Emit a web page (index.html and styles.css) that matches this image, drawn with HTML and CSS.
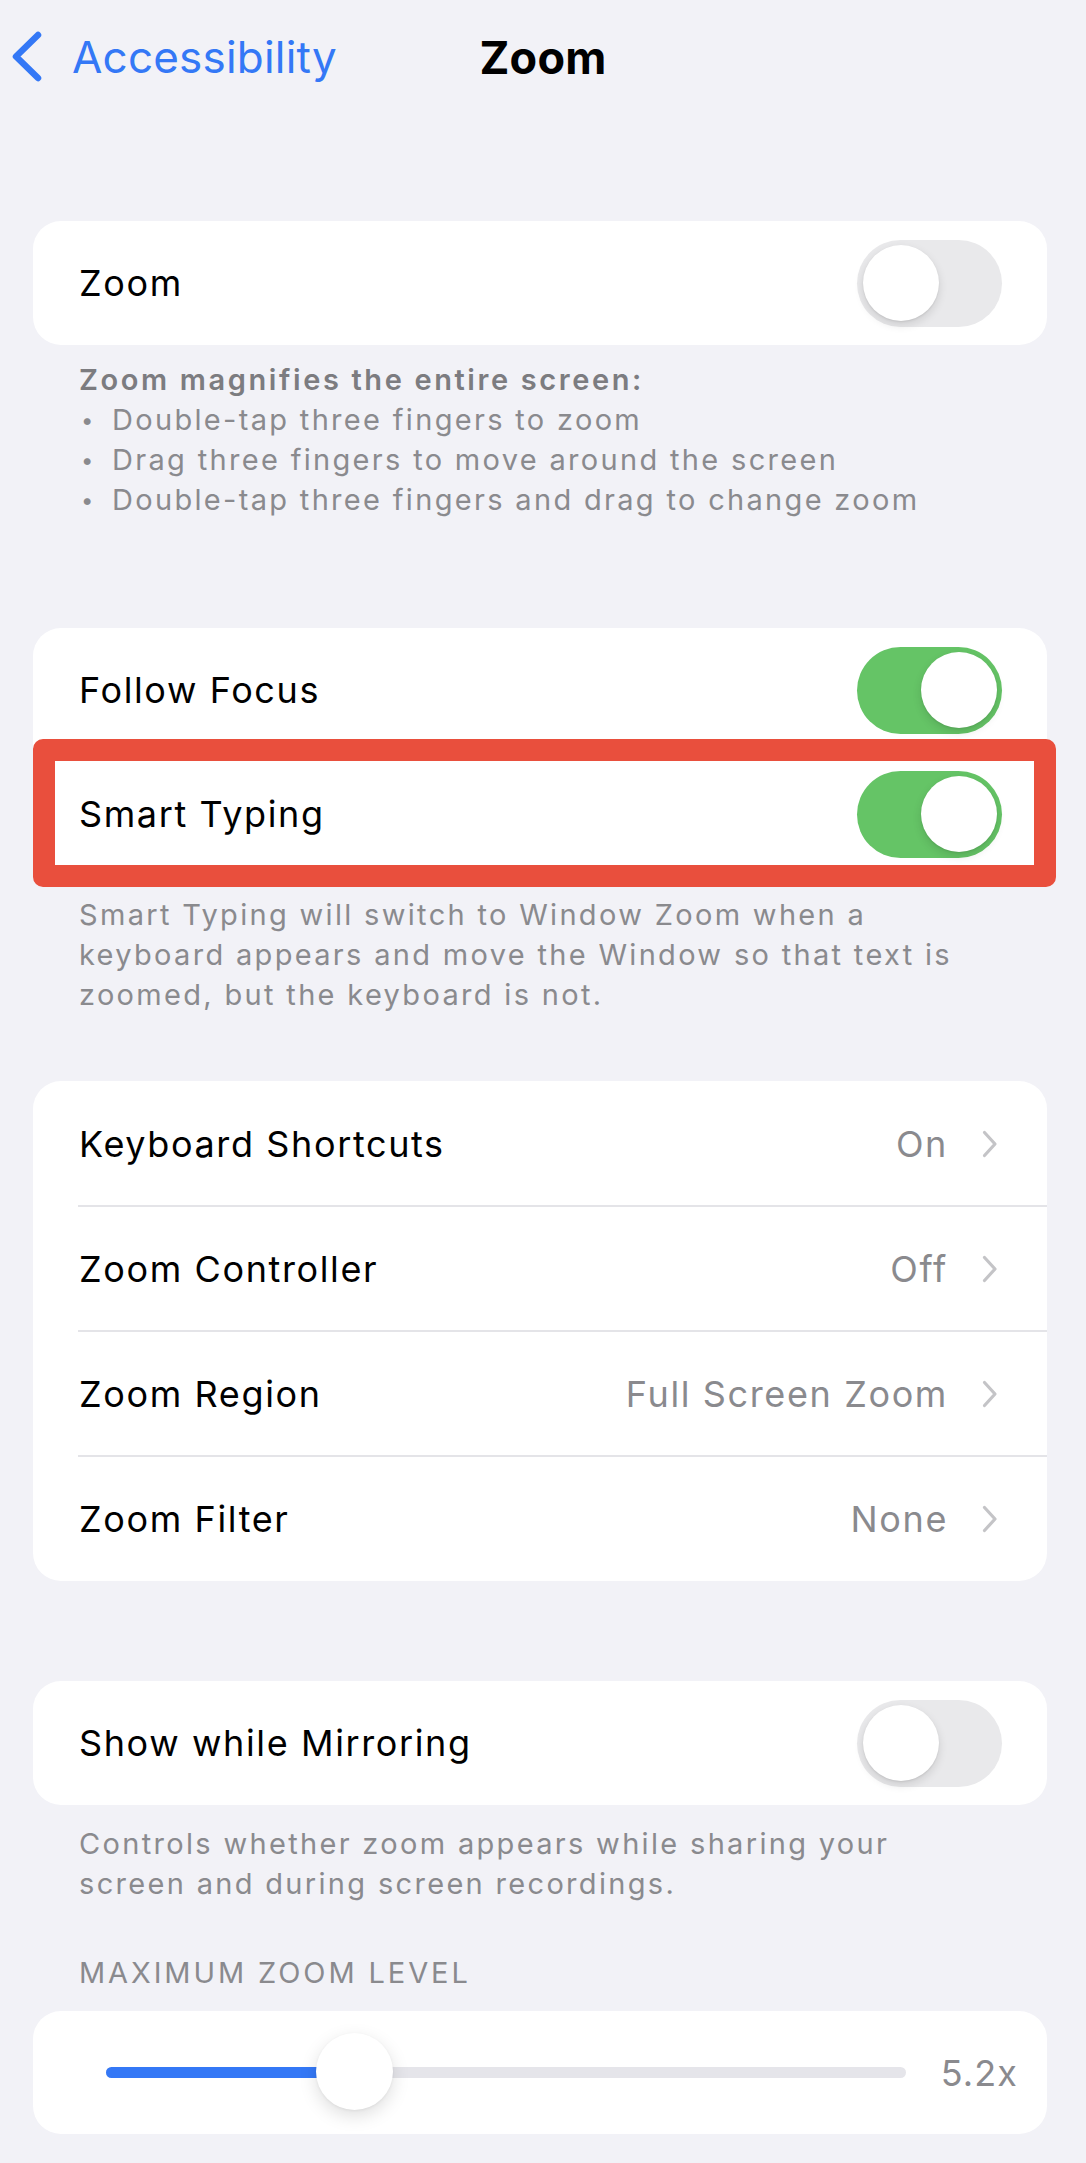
FILE: index.html
```html
<!DOCTYPE html>
<html lang="en">
<head>
<meta charset="utf-8">
<title>Zoom</title>
<link rel="stylesheet" href="styles.css">
</head>
<body>
<div class="screen">
  <header class="nav">
    <a class="back" href="#">
      <svg class="back-chevron" width="36" height="60" viewBox="0 0 36 60" aria-hidden="true">
        <path d="M28 8 L6 29.5 L28 51" fill="none" stroke="#3478F6" stroke-width="6.5" stroke-linecap="round" stroke-linejoin="round"/>
      </svg>
      <span class="back-label">Accessibility</span>
    </a>
    <h1 class="title">Zoom</h1>
    <div class="nav-spacer"></div>
  </header>

  <section class="group group-1">
    <div class="card">
      <div class="row">
        <span class="row-label">Zoom</span>
        <span class="toggle"><span class="knob"></span></span>
      </div>
    </div>
    <div class="footer footer-1">
      <p class="footer-strong">Zoom magnifies the entire screen:</p>
      <ul class="bullets">
        <li><span class="dot">•</span><span>Double-tap three fingers to zoom</span></li>
        <li><span class="dot">•</span><span>Drag three fingers to move around the screen</span></li>
        <li><span class="dot">•</span><span>Double-tap three fingers and drag to change zoom</span></li>
      </ul>
    </div>
  </section>

  <section class="group group-2">
    <div class="card">
      <div class="row">
        <span class="row-label">Follow Focus</span>
        <span class="toggle on"><span class="knob"></span></span>
      </div>
      <div class="row highlighted">
        <span class="row-label">Smart Typing</span>
        <span class="toggle on"><span class="knob"></span></span>
        <span class="highlight-box"></span>
      </div>
    </div>
    <div class="footer footer-2">
      <p>Smart Typing will switch to Window Zoom when a<br>keyboard appears and move the Window so that text is<br>zoomed, but the keyboard is not.</p>
    </div>
  </section>

  <section class="group group-3">
    <div class="card">
      <div class="row nav-row">
        <span class="row-label">Keyboard Shortcuts</span>
        <span class="row-value">On</span>
        <svg class="chev" width="16" height="28" viewBox="0 0 16 28" aria-hidden="true"><path d="M2.5 2.5 L13 14 L2.5 25.5" fill="none" stroke="#C4C4C7" stroke-width="3.2" stroke-linecap="round" stroke-linejoin="round"/></svg>
      </div>
      <div class="row nav-row">
        <span class="row-label">Zoom Controller</span>
        <span class="row-value">Off</span>
        <svg class="chev" width="16" height="28" viewBox="0 0 16 28" aria-hidden="true"><path d="M2.5 2.5 L13 14 L2.5 25.5" fill="none" stroke="#C4C4C7" stroke-width="3.2" stroke-linecap="round" stroke-linejoin="round"/></svg>
      </div>
      <div class="row nav-row">
        <span class="row-label">Zoom Region</span>
        <span class="row-value">Full Screen Zoom</span>
        <svg class="chev" width="16" height="28" viewBox="0 0 16 28" aria-hidden="true"><path d="M2.5 2.5 L13 14 L2.5 25.5" fill="none" stroke="#C4C4C7" stroke-width="3.2" stroke-linecap="round" stroke-linejoin="round"/></svg>
      </div>
      <div class="row nav-row">
        <span class="row-label">Zoom Filter</span>
        <span class="row-value">None</span>
        <svg class="chev" width="16" height="28" viewBox="0 0 16 28" aria-hidden="true"><path d="M2.5 2.5 L13 14 L2.5 25.5" fill="none" stroke="#C4C4C7" stroke-width="3.2" stroke-linecap="round" stroke-linejoin="round"/></svg>
      </div>
    </div>
  </section>

  <section class="group group-4">
    <div class="card">
      <div class="row">
        <span class="row-label">Show while Mirroring</span>
        <span class="toggle"><span class="knob"></span></span>
      </div>
    </div>
    <div class="footer footer-4">
      <p>Controls whether zoom appears while sharing your<br>screen and during screen recordings.</p>
    </div>
  </section>

  <section class="group group-5">
    <h2 class="section-header">Maximum Zoom Level</h2>
    <div class="card slider-card">
      <div class="slider">
        <div class="track"><div class="fill" style="width: 31%"></div></div>
        <span class="thumb" style="left: 31%"></span>
      </div>
      <span class="slider-value">5.2x</span>
    </div>
  </section>
</div>
</body>
</html>
```

FILE: styles.css
```css
* { box-sizing: border-box; }

html, body {
  margin: 0;
  padding: 0;
  background: #F2F2F7;
}

body {
  font-family: Inter, "Noto Sans", "Liberation Sans", sans-serif;
  color: #000;
  width: 1086px;
  height: 2163px;
  overflow: hidden;
}

.screen {
  padding: 0 39px 0 33px;
}

/* ---------- nav ---------- */
.nav {
  height: 114px;
  margin: 0 -39px 0 -33px;
  display: grid;
  grid-template-columns: 1fr auto 1fr;
  align-items: center;
}

.back {
  display: flex;
  align-items: center;
  text-decoration: none;
  color: #3478F6;
  padding-left: 10px;
}

.back-chevron { display: block; }

.back-label {
  font-size: 44px;
  margin-left: 26px;
  letter-spacing: 0.2px;
}

.title {
  margin: 0;
  font-size: 45px;
  font-weight: 700;
  letter-spacing: 0.2px;
}

/* ---------- groups ---------- */
.group-1 { margin-top: 107px; }
.group-2 { margin-top: 108px; }
.group-3 { margin-top: 66px; }
.group-4 { margin-top: 100px; }
.group-5 { margin-top: 49px; }

.card {
  background: #fff;
  border-radius: 28px;
}

.row {
  position: relative;
  height: 124px;
  display: flex;
  align-items: center;
  padding: 0 45px 0 46px;
}

.row-label {
  flex: 1;
  font-size: 36px;
  letter-spacing: 0.045em;
  white-space: nowrap;
}

/* ---------- toggle ---------- */
.toggle {
  width: 145px;
  height: 87px;
  border-radius: 44px;
  background: #E9E9EB;
  padding: 5.5px;
  display: flex;
  justify-content: flex-start;
  flex: none;
}

.toggle.on {
  background: #65C466;
  justify-content: flex-end;
}

.knob {
  width: 76px;
  height: 76px;
  border-radius: 50%;
  background: #fff;
  box-shadow: 0 4px 10px rgba(0,0,0,0.12), 0 1px 2px rgba(0,0,0,0.08);
}

/* ---------- highlight annotation ---------- */
.highlight-box {
  position: absolute;
  top: -13px;
  bottom: -11px;
  left: 0;
  right: -9px;
  border: 22px solid #E94F3D;
  border-radius: 10px;
  pointer-events: none;
}

/* ---------- footers ---------- */
.footer {
  padding-left: 46px;
  color: #8A8A8E;
  font-size: 29px;
  line-height: 40px;
  letter-spacing: 0.08em;
}

.footer p { margin: 0; }

.footer-1 { padding-top: 15px; }
.footer-2 { padding-top: 19px; }
.footer-4 { padding-top: 19px; }

.footer-strong {
  font-weight: 600;
  color: #7C7C80;
  letter-spacing: 0.09em;
}

.bullets {
  list-style: none;
  margin: 0;
  padding: 0;
}

.bullets li {
  display: flex;
}

.dot {
  width: 33px;
  flex: none;
  padding-left: 2px;
  font-size: 22px;
}

/* ---------- list rows ---------- */
.nav-row {
  height: 125px;
  padding-right: 49px;
}

.nav-row + .nav-row::before {
  content: "";
  position: absolute;
  left: 45px;
  right: 0;
  top: -1px;
  height: 2px;
  background: #E4E4E8;
}

.row-value {
  font-size: 36px;
  letter-spacing: 0.045em;
  color: #8A8A8E;
  white-space: nowrap;
}

.chev {
  flex: none;
  margin-left: 34px;
  display: block;
}

/* ---------- slider ---------- */
.section-header {
  margin: 0 0 18px;
  padding-left: 46px;
  font-size: 29px;
  font-weight: 400;
  line-height: 40px;
  letter-spacing: 0.1em;
  text-transform: uppercase;
  color: #8A8A8E;
}

.slider-card {
  height: 123px;
  display: flex;
  align-items: center;
  padding: 0 29px 0 73px;
}

.slider {
  position: relative;
  flex: 1;
  height: 80px;
  display: flex;
  align-items: center;
}

.track {
  width: 100%;
  height: 11px;
  border-radius: 6px;
  background: #E5E5EA;
  overflow: hidden;
}

.fill {
  height: 100%;
  background: #3478F6;
}

.thumb {
  position: absolute;
  top: 50%;
  width: 77px;
  height: 77px;
  margin: -40px 0 0 -38px;
  border-radius: 50%;
  background: #fff;
  box-shadow: 0 6px 18px rgba(0,0,0,0.13), 0 1px 3px rgba(0,0,0,0.06);
}

.slider-value {
  margin-left: 35px;
  font-size: 36px;
  letter-spacing: 0.03em;
  color: #8A8A8E;
}
```
